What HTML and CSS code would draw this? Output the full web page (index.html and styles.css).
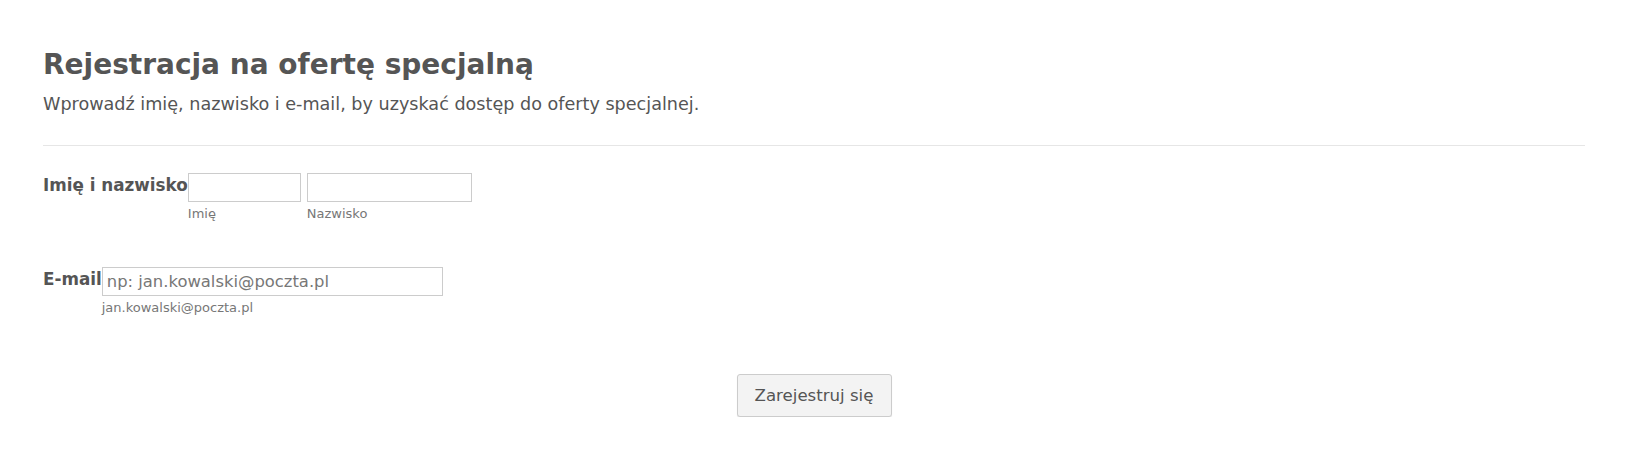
FILE: index.html
```html
<!DOCTYPE html>
<html lang="pl">
  <head>
    <meta charset="UTF-8" />
    <meta name="viewport" content="width=device-width, initial-scale=1.0" />
    <title>Rejestracja</title>
    <link rel="stylesheet" href="styles.css">
  </head>
  <body>
    <form class="form">
      <div class="header">
        <h1>Rejestracja na ofertę specjalną</h1>
        <p class="subtitle">Wprowadź imię, nazwisko i e-mail, by uzyskać dostęp do oferty specjalnej.</p>
      </div>

      <!-- Full name -->
      <div class="field">
        <label class="field-label" for="first">Imię i nazwisko</label>
        <div class="inputs">
          <span class="sub">
            <input type="text" id="first" class="input input-first" />
            <label class="sublabel" for="first">Imię</label>
          </span>
          <span class="sub">
            <input type="text" id="last" class="input input-last" />
            <label class="sublabel" for="last">Nazwisko</label>
          </span>
        </div>
      </div>

      <!-- Email -->
      <div class="field field-email">
        <label class="field-label" for="email">E-mail</label>
        <div class="inputs">
          <span class="sub">
            <input type="email" id="email" class="input input-email" placeholder="np: jan.kowalski@poczta.pl" />
            <label class="sublabel" for="email">jan.kowalski@poczta.pl</label>
          </span>
        </div>
      </div>

      <div class="actions">
        <button type="button" class="submit">Zarejestruj się</button>
      </div>
    </form>
  </body>
</html>
```
FILE: styles.css
```css
body {
  font-family: "DejaVu Sans", Verdana, sans-serif;
  color: #555;
  margin: 0;
  padding: 0 43px;
  background: #fff;
}

.form {
  padding-top: 48px;
}

.header {
  padding-bottom: 30px;
  border-bottom: 1px solid #e6e6e6;
}

.header h1 {
  font-size: 28px;
  font-weight: bold;
  margin: 0 0 11px;
  line-height: 34px;
}

.subtitle {
  font-size: 17.6px;
  margin: 0;
  line-height: 22px;
}

.field {
  display: flex;
  align-items: flex-start;
  margin-top: 27px;
}

.field-email {
  margin-top: 46px;
}

.field-label {
  font-weight: bold;
  font-size: 16.8px;
  line-height: 20px;
  padding-top: 2px;
}

.inputs {
  display: flex;
  gap: 6px;
}

.sub {
  display: flex;
  flex-direction: column;
}

.input {
  box-sizing: border-box;
  height: 29px;
  margin: 0;
  border: 1px solid #ccc;
  padding: 2px 4px;
  font-family: "DejaVu Sans", sans-serif;
  font-size: 16.4px;
  color: #555;
  background: #fff;
}

.input::placeholder {
  color: #777;
}

.input-first {
  width: 113px;
}

.input-last {
  width: 165px;
}

.input-email {
  width: 341px;
}

.sublabel {
  font-size: 13px;
  color: #777;
  margin-top: 4px;
  line-height: 15px;
}

.actions {
  text-align: center;
  margin-top: 59px;
}

.submit {
  font-family: "DejaVu Sans", sans-serif;
  font-size: 16.6px;
  color: #555;
  background: #f3f3f3;
  border: 1px solid #ccc;
  border-radius: 3px;
  box-shadow: 0 1px 1px rgba(0, 0, 0, 0.1);
  width: 155px;
  height: 43px;
}
```
